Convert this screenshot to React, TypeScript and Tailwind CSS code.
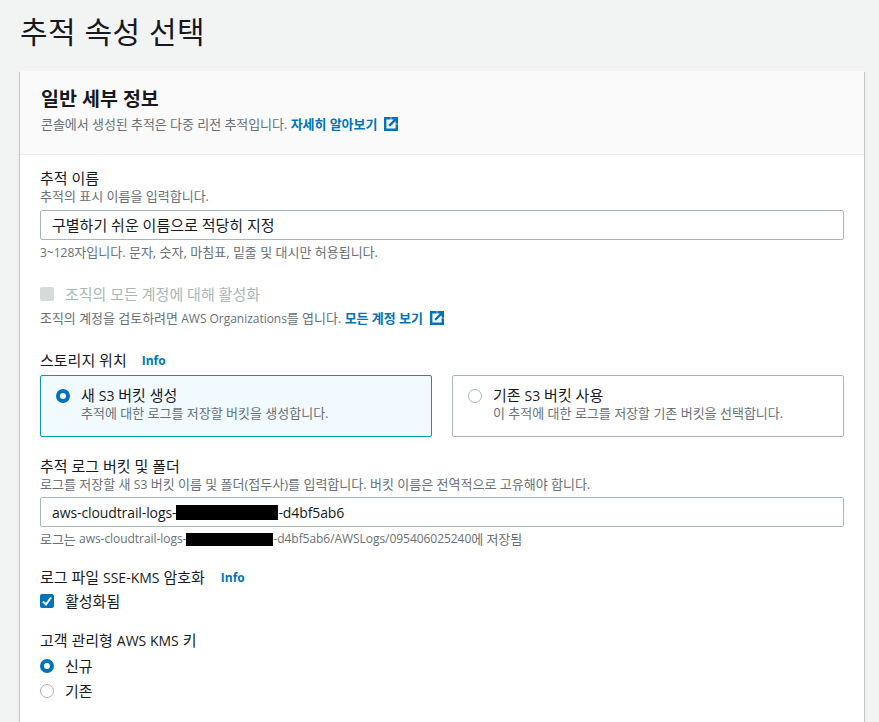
import React from "react";

const External = () => (
  <svg viewBox="0 0 14 14" className="inline-block w-[14px] h-[14px] ml-[7px] align-[-2px] text-[#0073bb]" fill="none" stroke="currentColor" strokeWidth="2.4">
    <path d="M5.5 1.2H1.2V12.8H12.8V8.5" strokeLinecap="square" />
    <path d="M8.5 1.2H12.8V5.5M12.3 1.7L6 8" strokeLinecap="square" />
  </svg>
);

const Radio = ({ on }: { on?: boolean }) =>
  on ? (
    <span className="block w-[14px] h-[14px] shrink-0 rounded-full border-[4px] border-[#0073bb] bg-white" />
  ) : (
    <span className="block w-[14px] h-[14px] shrink-0 rounded-full border border-[#aab7b8] bg-white" />
  );

const Info = ({ cls }: { cls: string }) => (
  <span className={"mt-[2px] text-[12px] font-bold text-[#0073bb] leading-[16px] " + cls}>Info</span>
);

const Label = ({ children }: { children: React.ReactNode }) => (
  <div className="text-[15px] leading-[20px] text-[#16191f]">{children}</div>
);

const Desc = ({ children }: { children: React.ReactNode }) => (
  <div className="text-[13px] leading-[16px] text-[#687078]">{children}</div>
);

const L14 = ({ children }: { children: React.ReactNode }) => <span className="text-[14px]">{children}</span>;
const L12 = ({ children }: { children: React.ReactNode }) => <span className="text-[12px]">{children}</span>;

const Tile = ({ on, title, desc }: { on?: boolean; title: React.ReactNode; desc: string }) => (
  <div className={"flex-1 h-[62px] rounded-[2px] border pl-[15px] pt-[10px] flex gap-[11px] " + (on ? "border-[#0099bb] bg-[#f1faff]" : "border-[#aab7b8] bg-white")}>
    <div className="pt-[3px]"><Radio on={on} /></div>
    <div>
      <div className="text-[15px] leading-[18px] text-[#16191f]">{title}</div>
      <div className="text-[13px] leading-[16px] text-[#687078]">{desc}</div>
    </div>
  </div>
);

const Input = ({ children }: { children: React.ReactNode }) => (
  <div className="h-[30px] rounded-[2px] border border-[#aab7b8] bg-white pl-[11px] flex items-center text-[#16191f]">{children}</div>
);

export default function App() {
  return (
    <div className="h-[722px] overflow-hidden bg-[#f2f3f3] pl-[20px] pr-[15px]" style={{ fontFamily: '"Open Sans","Noto Sans CJK KR",sans-serif' }}>
      <h1 className="h-[71px] pt-[12px] text-[30px] leading-[40px] tracking-[0.5px] font-normal text-[#16191f]">추적 속성 선택</h1>
      <div className="bg-white shadow-[0_1px_1px_0_rgba(0,28,36,0.3),1px_1px_1px_0_rgba(0,28,36,0.15),-1px_1px_1px_0_rgba(0,28,36,0.15)]">
        <div className="h-[84px] bg-[#fafafa] border-b border-[#eaeded] px-[21px] pt-[15px]">
          <div className="text-[19.5px] leading-[26px] font-bold text-[#16191f]">일반 세부 정보</div>
          <div className="mt-[2px] text-[13px] leading-[20px] tracking-[-0.05px] text-[#687078]">
            콘솔에서 생성된 추적은 다중 리전 추적입니다. <span className="font-bold text-[#0073bb]">자세히 알아보기</span>
            <External />
          </div>
        </div>
        <div className="px-[20px] pt-[13px] h-[600px]">
          <Label>추적 이름</Label>
          <Desc>추적의 표시 이름을 입력합니다.</Desc>
          <div className="mt-[6px]"><Input><span className="text-[15px]">구별하기 쉬운 이름으로 적당히 지정</span></Input></div>
          <div className="mt-[4px]"><Desc><L12>3~128</L12>자입니다. 문자, 숫자, 마침표, 밑줄 및 대시만 허용됩니다.</Desc></div>

          <div className="mt-[23px] flex items-center gap-[11px] h-[20px]">
            <span className="block w-[14px] h-[14px] rounded-[2px] bg-[#d5dbdb]" />
            <span className="text-[15px] leading-[20px] text-[#aab7b8]">조직의 모든 계정에 대해 활성화</span>
          </div>
          <div className="mt-[4px] text-[13px] leading-[20px] tracking-[-0.03px] text-[#687078]">
            조직의 계정을 검토하려면 <L12>AWS Organizations</L12>를 엽니다. <span className="font-bold text-[#0073bb]">모든 계정 보기</span>
            <External />
          </div>

          <div className="mt-[21px] flex items-center h-[20px]">
            <Label>스토리지 위치</Label>
            <Info cls="ml-[15px]" />
          </div>
          <div className="mt-[5px] flex gap-[20px]">
            <Tile on title={<>새 <L14>S3</L14> 버킷 생성</>} desc="추적에 대한 로그를 저장할 버킷을 생성합니다." />
            <Tile title={<>기존 <L14>S3</L14> 버킷 사용</>} desc="이 추적에 대한 로그를 저장할 기존 버킷을 선택합니다." />
          </div>

          <div className="mt-[19px]"><Label>추적 로그 버킷 및 폴더</Label></div>
          <Desc>로그를 저장할 새 <L12>S3</L12> 버킷 이름 및 폴더(접두사)를 입력합니다. 버킷 이름은 전역적으로 고유해야 합니다.</Desc>
          <div className="mt-[4px]">
            <Input>
              <span className="text-[14px] tracking-[-0.1px]">aws-cloudtrail-logs-</span>
              <span className="inline-block w-[102px] h-[15px] bg-black" />
              <span className="text-[14px] tracking-[-0.1px]">-d4bf5ab6</span>
            </Input>
          </div>
          <div className="mt-[4px] flex items-center text-[13px] leading-[16px] tracking-[-0.05px] text-[#687078] whitespace-pre">
            로그는 <L12>aws-cloudtrail-logs-</L12>
            <span className="inline-block w-[87px] h-[13px] bg-black" />
            <L12>-d4bf5ab6/AWSLogs/095406025240</L12>에 저장됨
          </div>

          <div className="mt-[20px] flex items-center h-[20px]">
            <Label>로그 파일 <L14>SSE-KMS</L14> 암호화</Label>
            <Info cls="ml-[16px]" />
          </div>
          <div className="mt-[4px] flex items-center gap-[11px] h-[20px]">
            <span className="flex items-center justify-center w-[14px] h-[14px] rounded-[2px] bg-[#0073bb]">
              <svg viewBox="0 0 14 14" className="w-[14px] h-[14px]" fill="none" stroke="white" strokeWidth="2">
                <path d="M3 7.5L6 10.5L11 3.5" />
              </svg>
            </span>
            <span className="text-[15px] leading-[20px] text-[#16191f]">활성화됨</span>
          </div>

          <div className="mt-[19px]"><Label>고객 관리형 <L14>AWS KMS</L14> 키</Label></div>
          <div className="mt-[5px] flex items-center gap-[11px] h-[20px]">
            <Radio on />
            <span className="text-[15px] leading-[20px] text-[#16191f]">신규</span>
          </div>
          <div className="mt-[5px] flex items-center gap-[11px] h-[20px]">
            <Radio />
            <span className="text-[15px] leading-[20px] text-[#16191f]">기존</span>
          </div>
        </div>
      </div>
    </div>
  );
}
